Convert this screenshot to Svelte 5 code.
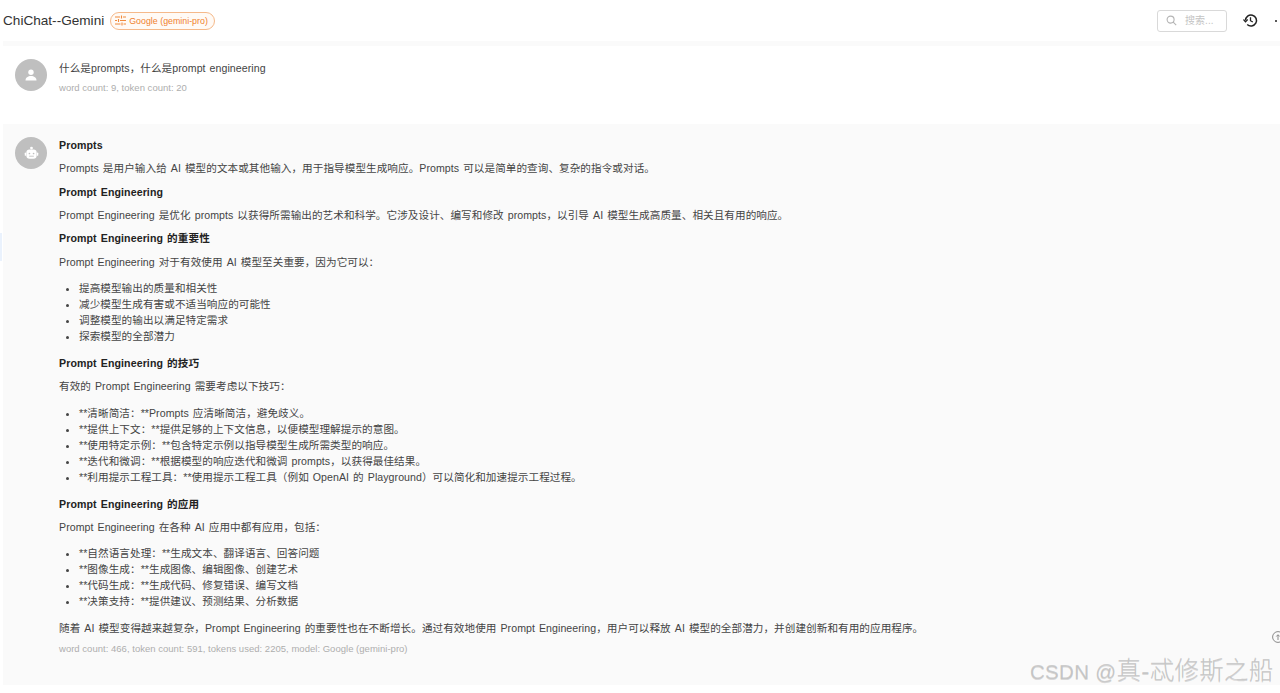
<script>
  const first = ["提高模型输出的质量和相关性", "减少模型生成有害或不适当响应的可能性", "调整模型的输出以满足特定需求", "探索模型的全部潜力"];
  const skills = [
    "**清晰简洁：**Prompts 应清晰简洁，避免歧义。",
    "**提供上下文：**提供足够的上下文信息，以便模型理解提示的意图。",
    "**使用特定示例：**包含特定示例以指导模型生成所需类型的响应。",
    "**迭代和微调：**根据模型的响应迭代和微调 prompts，以获得最佳结果。",
    "**利用提示工程工具：**使用提示工程工具（例如 OpenAI 的 Playground）可以简化和加速提示工程过程。",
  ];
  const uses = [
    "**自然语言处理：**生成文本、翻译语言、回答问题",
    "**图像生成：**生成图像、编辑图像、创建艺术",
    "**代码生成：**生成代码、修复错误、编写文档",
    "**决策支持：**提供建议、预测结果、分析数据",
  ];
</script>

<div class="page">
  <header class="top">
    <div class="brand">
      <span class="title">ChiChat--Gemini</span>
      <span class="tag">
        <svg width="11" height="11" viewBox="0 0 11 11" fill="none" stroke="#f08a3c" stroke-width="1.100">
          <path d="M0 2h5M8 2h3M0 5.500h2M5 5.500h6M0 9h5.500M8.500 9H11M6.500 0.500v3M3.500 4v3M7 7.500v3" />
        </svg>
        Google (gemini-pro)
      </span>
    </div>
    <div class="tools">
      <div class="search">
        <svg width="11" height="11" viewBox="0 0 11 11" fill="none" stroke="#b4b4b4" stroke-width="1.100">
          <circle cx="4.600" cy="4.600" r="3.500" />
          <path d="M7.200 7.200l3 3" />
        </svg>
        <span>搜索...</span>
      </div>
      <svg class="history" width="15" height="15" viewBox="0 0 15 15" fill="none" stroke="#222" stroke-width="1.500">
        <path d="M2.500 7.500a5.500 5.500 0 1 1 1.700 4" />
        <path d="M0.500 6.500l2 2.300 2.200-2.300" stroke-width="1.200" />
        <path d="M7.500 4.300v3.400l2.300 1.300" stroke-width="1.300" />
      </svg>
      <span class="dot"></span>
    </div>
  </header>
  <div class="strip"></div>

  <section class="msg user">
    <div class="avatar">
      <svg width="16" height="16" viewBox="0 0 16 16" fill="#fff">
        <circle cx="8" cy="5.300" r="2.700" />
        <path d="M2.500 13.500c0-3 2.500-4.500 5.500-4.500s5.500 1.500 5.500 4.500z" />
      </svg>
    </div>
    <div class="body">
      <p class="line">什么是prompts，什么是prompt engineering</p>
      <p class="meta">word count: 9, token count: 20</p>
    </div>
  </section>

  <section class="msg bot">
    <div class="avatar">
      <svg width="15" height="15" viewBox="0 0 16 16" fill="#fff">
        <circle cx="8" cy="2.200" r="1.500" />
        <rect x="2.500" y="3.800" width="11" height="9.700" rx="3.500" />
        <rect x="0.800" y="7" width="1.400" height="3.500" rx="0.700" />
        <rect x="13.800" y="7" width="1.400" height="3.500" rx="0.700" />
        <circle cx="5.800" cy="8" r="0.900" fill="#bfbfbf" />
        <circle cx="10.200" cy="8" r="0.900" fill="#bfbfbf" />
        <rect x="5.500" y="10.400" width="5" height="0.900" fill="#bfbfbf" />
      </svg>
    </div>
    <div class="body">
      <h4>Prompts</h4>
      <p>Prompts 是用户输入给 AI 模型的文本或其他输入，用于指导模型生成响应。Prompts 可以是简单的查询、复杂的指令或对话。</p>
      <h4>Prompt Engineering</h4>
      <p>Prompt Engineering 是优化 prompts 以获得所需输出的艺术和科学。它涉及设计、编写和修改 prompts，以引导 AI 模型生成高质量、相关且有用的响应。</p>
      <h4>Prompt Engineering 的重要性</h4>
      <p>Prompt Engineering 对于有效使用 AI 模型至关重要，因为它可以：</p>
      <ul>
        {#each first as item}<li>{item}</li>{/each}
      </ul>
      <h4>Prompt Engineering 的技巧</h4>
      <p>有效的 Prompt Engineering 需要考虑以下技巧：</p>
      <ul>
        {#each skills as item}<li>{item}</li>{/each}
      </ul>
      <h4>Prompt Engineering 的应用</h4>
      <p>Prompt Engineering 在各种 AI 应用中都有应用，包括：</p>
      <ul>
        {#each uses as item}<li>{item}</li>{/each}
      </ul>
      <p class="last">随着 AI 模型变得越来越复杂，Prompt Engineering 的重要性也在不断增长。通过有效地使用 Prompt Engineering，用户可以释放 AI 模型的全部潜力，并创建创新和有用的应用程序。</p>
      <p class="meta">word count: 466, token count: 591, tokens used: 2205, model: Google (gemini-pro)</p>
    </div>
  </section>

  <div class="edge"></div>
  <svg class="round" width="12" height="12" viewBox="0 0 12 12" fill="none" stroke="#8a8a8a">
    <circle cx="6" cy="6" r="5.400" />
    <path d="M6 9V4M4.300 5.500L6 3.700l1.700 1.800" />
  </svg>
  <div class="mark">CSDN @<span>真-忒修斯之船</span></div>
</div>

<style>
  :global(body) {
    margin: 0;
    background: #fff;
  }

  .page {
    height: 693px;
    overflow: hidden;
    position: relative;
    font-family: "Liberation Sans", "Noto Sans CJK SC", sans-serif;
    font-size: 10.600px;
    line-height: 16px;
    color: #444;
    letter-spacing: 0.06px;
    word-spacing: 1px;
  }

  .top {
    height: 41px;
    display: flex;
    align-items: center;
    justify-content: space-between;
    padding-left: 3px;
  }

  .brand {
    display: flex;
    align-items: center;
    gap: 6px;
  }

  .title {
    font-size: 13.600px;
    color: #333;
    letter-spacing: 0;
    word-spacing: 0;
  }

  .tag {
    display: flex;
    align-items: center;
    gap: 3px;
    height: 18px;
    box-sizing: border-box;
    padding: 0 6px 0 4px;
    border: 1px solid #f5b98a;
    border-radius: 10px;
    background: #fffaf5;
    color: #ef7f2e;
    font-size: 8.800px;
    letter-spacing: 0.02px;
    word-spacing: 0;
  }

  .tools {
    display: flex;
    align-items: center;
  }

  .search {
    width: 70px;
    height: 22px;
    box-sizing: border-box;
    border: 1px solid #d9d9d9;
    border-radius: 3px;
    display: flex;
    align-items: center;
    gap: 8px;
    padding-left: 8px;
    color: #c4c4c4;
    font-size: 10px;
  }

  .history {
    margin-left: 16px;
  }

  .dot {
    width: 2px;
    height: 2px;
    border-radius: 50%;
    background: #222;
    margin-left: 17px;
    margin-right: 3px;
  }

  .strip {
    height: 5px;
    margin-left: 3px;
    background: #fafafa;
  }

  .msg {
    display: flex;
    gap: 12px;
    padding: 13px 12px 0;
  }

  .user {
    height: 65px;
    padding-left: 15px;
  }

  .bot {
    margin-left: 3px;
    height: 561px;
    box-sizing: border-box;
    background: #fafafa;
  }

  .avatar {
    flex: none;
    width: 32px;
    height: 32px;
    border-radius: 50%;
    background: #bfbfbf;
    display: flex;
    align-items: center;
    justify-content: center;
  }

  .body {
    flex: 1;
    min-width: 0;
  }

  p,
  h4 {
    margin: 0 0 7.350px;
  }

  .line {
    margin-top: 1px;
    margin-bottom: 4px;
  }

  h4 {
    font-size: 10.600px;
    font-weight: 700;
    color: #222;
    letter-spacing: 0.1px;
  }

  ul {
    margin: 10.400px 0 10.900px;
    padding-left: 20px;
  }

  li {
    height: 16px;
  }

  .last {
    margin-bottom: 4.500px;
  }

  .meta {
    margin: 0;
    font-size: 9.500px;
    color: #aeaeae;
    letter-spacing: 0.02px;
    word-spacing: 0;
  }

  .edge {
    position: absolute;
    left: 0;
    top: 233px;
    width: 2px;
    height: 28px;
    background: #eaf2fd;
  }

  .round {
    position: absolute;
    left: 1272px;
    top: 631px;
  }

  .mark {
    position: absolute;
    left: 1030px;
    top: 658px;
    font-size: 20.500px;
    line-height: 26px;
    color: rgba(190, 190, 190, 0.75);
    letter-spacing: 0.3px;
    word-spacing: 0;
    white-space: nowrap;
    text-shadow: 0 1px 0 rgba(120, 120, 120, 0.25);
  }

  .mark span {
    font-size: 24.500px;
    font-weight: 300;
  }
</style>
